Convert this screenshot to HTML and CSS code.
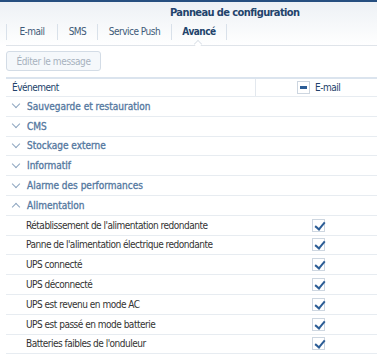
FILE: index.html
```html
<!DOCTYPE html>
<html lang="fr">
<head>
    <meta charset="UTF-8">
    <meta name="viewport" content="width=device-width, initial-scale=1.0">
    <title>Panneau de configuration</title>
    <link rel="stylesheet" href="styles.css">
</head>
<body>
    <div class="window">
        <div class="titlebar">Panneau de configuration</div>
        <div class="tabs">
            <div class="tab tab-email">E-mail</div>
            <div class="tab tab-sms">SMS</div>
            <div class="tab tab-push">Service Push</div>
            <div class="tab tab-adv active">Avancé</div>
        </div>
        <div class="toolbar">
            <button class="edit-btn" disabled>Éditer le message</button>
        </div>
        <div class="grid">
            <div class="row head">
                <div class="cell event">Événement</div>
                <div class="cell mail"><span class="box minus"><span></span></span>E-mail</div>
            </div>
            <div class="row group"><span class="chev down"></span>Sauvegarde et restauration</div>
            <div class="row group"><span class="chev down"></span>CMS</div>
            <div class="row group"><span class="chev down"></span>Stockage externe</div>
            <div class="row group"><span class="chev down"></span>Informatif</div>
            <div class="row group"><span class="chev down"></span>Alarme des performances</div>
            <div class="row group"><span class="chev up"></span>Alimentation</div>
            <div class="row item"><div class="cell event">Rétablissement de l'alimentation redondante</div><div class="cell mail"><span class="box checked"></span></div></div>
            <div class="row item"><div class="cell event">Panne de l'alimentation électrique redondante</div><div class="cell mail"><span class="box checked"></span></div></div>
            <div class="row item"><div class="cell event">UPS connecté</div><div class="cell mail"><span class="box checked"></span></div></div>
            <div class="row item"><div class="cell event">UPS déconnecté</div><div class="cell mail"><span class="box checked"></span></div></div>
            <div class="row item"><div class="cell event">UPS est revenu en mode AC</div><div class="cell mail"><span class="box checked"></span></div></div>
            <div class="row item"><div class="cell event">UPS est passé en mode batterie</div><div class="cell mail"><span class="box checked"></span></div></div>
            <div class="row item"><div class="cell event">Batteries faibles de l'onduleur</div><div class="cell mail"><span class="box checked"></span></div></div>
        </div>
    </div>
</body>
</html>
```
FILE: styles.css
```css
body {
    margin: 0;
    background: #ffffff;
    font-family: "DejaVu Sans Condensed", "DejaVu Sans", sans-serif;
    font-stretch: condensed;
    font-size: 10px;
    letter-spacing: -0.5px;
    color: #333333;
}
.window {
    border-top: 2px solid #264f80;
    background: linear-gradient(#edf1f5, #ffffff 44px);
    height: 356px;
    overflow: hidden;
}
.titlebar {
    height: 22px;
    line-height: 22px;
    padding-left: 170px;
    font-size: 11px;
    font-weight: bold;
    letter-spacing: -0.6px;
    color: #22436b;
}
.tabs {
    display: flex;
    margin-left: 6px;
    height: 21px;
    border-bottom: 1px solid #dfe4ea;
}
.tab {
    height: 16px;
    line-height: 16px;
    text-align: center;
    color: #3f5a78;
    border-right: 1px solid #d9e1ea;
}
.tab-email { width: 50px; border-left: 1px solid #d9e1ea; }
.tab-sms { width: 39px; }
.tab-push { width: 73px; }
.tab-adv { width: 54px; }
.tab.active {
    font-weight: bold;
    color: #22436b;
    position: relative;
}
.tab.active::after {
    content: "";
    position: absolute;
    left: 23px;
    bottom: -7px;
    width: 5px;
    height: 5px;
    background: #ffffff;
    border-left: 1px solid #dfe4ea;
    border-top: 1px solid #dfe4ea;
    transform: rotate(45deg);
}
.toolbar {
    padding: 5px 0 6px 6px;
}
.edit-btn {
    display: block;
    width: 95px;
    height: 20px;
    padding: 0;
    font-family: inherit;
    font-stretch: condensed;
    font-size: 10px;
    letter-spacing: -0.4px;
    color: #a7b2be;
    background: #f5f8fb;
    border: 1px solid #d3dce6;
    border-radius: 3px;
}
.grid {
    margin-left: 6px;
    border-top: 2px solid #dbe4ee;
}
.row {
    display: flex;
    align-items: center;
    height: 18.8px;
    border-bottom: 1px solid #e7ecf1;
}
.row.head {
    height: 17px;
    color: #22436b;
}
.cell.event {
    flex: 1;
    padding-left: 6px;
}
.row.head .cell.event {
    border-right: 1px solid #e3e8ee;
    height: 100%;
    line-height: 17px;
}
.row.item .cell.event {
    padding-left: 20px;
}
.cell.mail {
    display: flex;
    align-items: center;
}
.row.head .cell.mail {
    padding-left: 41px;
    width: 80px;
}
.row.item .cell.mail {
    padding-left: 56px;
    width: 65px;
}
.group {
    padding-left: 6px;
    color: #5478a0;
    letter-spacing: 0;
    -webkit-text-stroke: 0.3px #5478a0;
}
.chev {
    width: 5px;
    height: 5px;
    margin-right: 9px;
    border-right: 1px solid #8ea6c0;
    border-bottom: 1px solid #8ea6c0;
}
.chev.down {
    transform: translate(1px, -2px) rotate(45deg);
}
.chev.up {
    transform: translate(1px, 2px) rotate(-135deg);
}
.box {
    width: 11px;
    height: 11px;
    border: 1px solid #cdd6e0;
    background: #ffffff;
    position: relative;
    display: inline-block;
}
.box.minus {
    margin-right: 5px;
}
.box.minus span {
    position: absolute;
    left: 2px;
    top: 4px;
    width: 7px;
    height: 3px;
    background: #2c5d96;
}
.box.checked::after {
    content: "";
    position: absolute;
    left: 4px;
    top: 0px;
    width: 4px;
    height: 8px;
    border-right: 2px solid #2c5d96;
    border-bottom: 2px solid #2c5d96;
    transform: rotate(40deg);
}
```
